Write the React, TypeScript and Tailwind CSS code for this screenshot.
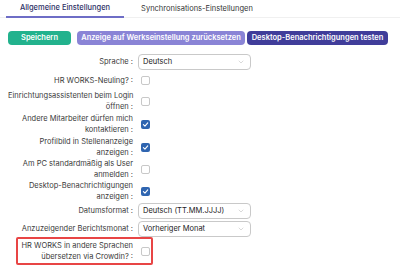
import { ChevronDown } from 'lucide-react'

function Checkbox({ checked }: { checked?: boolean }) {
  return (
    <div
      className={
        checked
          ? 'w-[9px] h-[9px] rounded-[2px] bg-[#2f65b0] flex items-center justify-center'
          : 'w-[9px] h-[9px] rounded-[2px] border border-[#c8c8c8] bg-white'
      }
    >
      {checked && (
        <svg width="7" height="7" viewBox="0 0 10 10">
          <path d="M2 5.3 L4.2 7.4 L8.2 2.6" fill="none" stroke="white" strokeWidth="1.6" strokeLinecap="round" strokeLinejoin="round" />
        </svg>
      )}
    </div>
  )
}

function Select({ value }: { value: string }) {
  return (
    <div className="w-[113px] h-[16px] border border-[#c9c9c9] rounded-[4px] bg-white flex items-center justify-between pl-[4px] pr-[5px] text-[#222]">
      <span className="whitespace-nowrap">{value}</span>
      <ChevronDown size={8} strokeWidth={1.5} className="text-[#b5b5b5]" />
    </div>
  )
}

const rows: { label: string[]; checked: boolean; h: string }[] = [
  { label: ['HR WORKS-Neuling? :'], checked: false, h: 'h-[19px]' },
  { label: ['Einrichtungsassistenten beim Login', 'öffnen :'], checked: false, h: 'h-[22px]' },
  { label: ['Andere Mitarbeiter dürfen mich', 'kontaktieren :'], checked: true, h: 'h-[24px]' },
  { label: ['Profilbild in Stellenanzeige', 'anzeigen :'], checked: true, h: 'h-[22px]' },
  { label: ['Am PC standardmäßig als User', 'anmelden :'], checked: false, h: 'h-[22px]' },
  { label: ['Desktop-Benachrichtigungen', 'anzeigen :'], checked: true, h: 'h-[22px]' },
]

export default function App() {
  return (
    <div
      className="w-[400px] h-[276px] bg-white text-[7.5px] text-[#3a3a3a] overflow-hidden whitespace-nowrap"
      style={{ fontFamily: 'Inter, "Noto Sans", sans-serif' }}
    >
      {/* Tabs */}
      <div className="flex px-[6px] border-b border-[#f0f0f0] h-[18px]">
        <div className="w-[118px] h-[18px] flex items-center justify-center border-b-2 border-[#6e6dc6] font-medium text-[#2e3066] -mb-px">
          Allgemeine Einstellungen
        </div>
        <div className="w-[146px] h-[18px] flex items-center justify-center text-[#333]">
          Synchronisations-Einstellungen
        </div>
      </div>

      {/* Buttons */}
      <div className="flex items-center px-[8px] mt-[13px] h-[14px] font-semibold text-white">
        <div className="w-[63px] h-[14px] rounded-[4px] bg-[#22b28d] flex items-center justify-center">Speichern</div>
        <div className="ml-[6px] w-[168px] h-[14px] rounded-[4px] bg-[#8a84d6] flex items-center justify-center">
          Anzeige auf Werkseinstellung zurücksetzen
        </div>
        <div className="ml-[2px] w-[141px] h-[14px] rounded-[4px] bg-[#403d9a] flex items-center justify-center">
          Desktop-Benachrichtigungen testen
        </div>
      </div>

      {/* Form */}
      <div className="flex flex-col px-[8px] mt-[8px] leading-[11.5px]">
        <div className="flex items-center h-[18px]">
          <div className="w-[125px] text-right">Sprache :</div>
          <div className="ml-[5px]">
            <Select value="Deutsch" />
          </div>
        </div>

        {rows.map((r) => (
          <div key={r.label[0]} className={`flex items-center ${r.h}`}>
            <div className="w-[125px] text-right">
              {r.label.map((l) => (
                <div key={l}>{l}</div>
              ))}
            </div>
            <div className="ml-[8px]">
              <Checkbox checked={r.checked} />
            </div>
          </div>
        ))}

        <div className="flex items-center h-[18px]">
          <div className="w-[125px] text-right">Datumsformat :</div>
          <div className="ml-[5px]">
            <Select value="Deutsch (TT.MM.JJJJ)" />
          </div>
        </div>
        <div className="flex items-center h-[17px]">
          <div className="w-[125px] text-right">Anzuzeigender Berichtsmonat :</div>
          <div className="ml-[5px]">
            <Select value="Vorheriger Monat" />
          </div>
        </div>

        <div className="ml-[8px] w-[137px] h-[28px] border-2 border-[#e84545] rounded-[2px] flex items-center">
          <div className="w-[115px] text-right">
            <div>HR WORKS in andere Sprachen</div>
            <div>übersetzen via Crowdin? :</div>
          </div>
          <div className="ml-[8px]">
            <Checkbox />
          </div>
        </div>
      </div>
    </div>
  )
}
